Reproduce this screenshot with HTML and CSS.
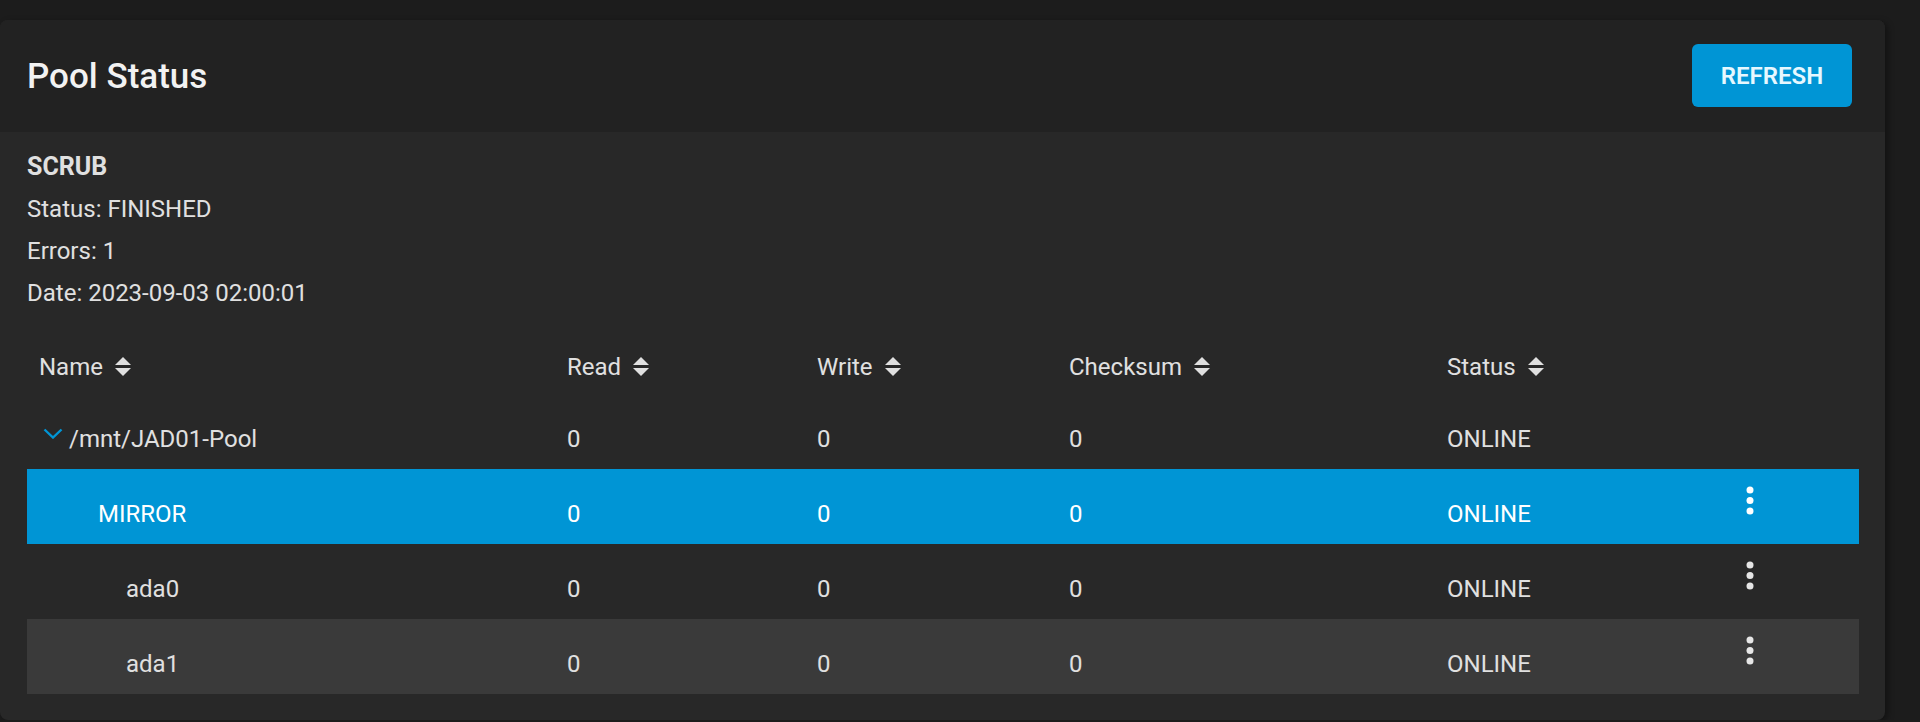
FILE: index.html
```html
<!DOCTYPE html>
<html lang="en">
<head>
    <meta charset="UTF-8">
    <meta name="viewport" content="width=device-width, initial-scale=1.0">
    <title>Pool Status</title>
    <link rel="stylesheet" href="styles.css">
</head>
<body>
    <div class="card">
        <div class="card-header">
            <h1 class="card-title">Pool Status</h1>
            <button class="refresh-button" type="button">REFRESH</button>
        </div>
        <div class="card-body">
            <div class="scrub">
                <div class="scrub-title">SCRUB</div>
                <div class="scrub-line">Status: FINISHED</div>
                <div class="scrub-line">Errors: 1</div>
                <div class="scrub-line">Date: 2023-09-03 02:00:01</div>
            </div>
            <div class="pool-table">
                <div class="table-row table-head">
                    <div class="cell">Name <svg class="sort-icon" viewBox="0 0 16 20"><polygon points="0,8 8,0 16,8"/><polygon points="0,11 8,19 16,11"/></svg></div>
                    <div class="cell">Read <svg class="sort-icon" viewBox="0 0 16 20"><polygon points="0,8 8,0 16,8"/><polygon points="0,11 8,19 16,11"/></svg></div>
                    <div class="cell">Write <svg class="sort-icon" viewBox="0 0 16 20"><polygon points="0,8 8,0 16,8"/><polygon points="0,11 8,19 16,11"/></svg></div>
                    <div class="cell">Checksum <svg class="sort-icon" viewBox="0 0 16 20"><polygon points="0,8 8,0 16,8"/><polygon points="0,11 8,19 16,11"/></svg></div>
                    <div class="cell">Status <svg class="sort-icon" viewBox="0 0 16 20"><polygon points="0,8 8,0 16,8"/><polygon points="0,11 8,19 16,11"/></svg></div>
                    <div class="cell"></div>
                </div>
                <div class="table-row">
                    <div class="cell name-cell level-0">
                        <svg class="chevron" viewBox="0 0 20 11"><polyline points="1.5,1.5 10,9.5 18.5,1.5"/></svg>/mnt/JAD01-Pool
                    </div>
                    <div class="cell">0</div>
                    <div class="cell">0</div>
                    <div class="cell">0</div>
                    <div class="cell">ONLINE</div>
                    <div class="cell"></div>
                </div>
                <div class="table-row selected">
                    <div class="cell name-cell level-1">MIRROR</div>
                    <div class="cell">0</div>
                    <div class="cell">0</div>
                    <div class="cell">0</div>
                    <div class="cell">ONLINE</div>
                    <div class="cell actions"><svg class="more-icon" viewBox="0 0 8 30"><circle cx="4" cy="4" r="3.5"/><circle cx="4" cy="14.5" r="3.5"/><circle cx="4" cy="25" r="3.5"/></svg></div>
                </div>
                <div class="table-row">
                    <div class="cell name-cell level-2">ada0</div>
                    <div class="cell">0</div>
                    <div class="cell">0</div>
                    <div class="cell">0</div>
                    <div class="cell">ONLINE</div>
                    <div class="cell actions"><svg class="more-icon" viewBox="0 0 8 30"><circle cx="4" cy="4" r="3.5"/><circle cx="4" cy="14.5" r="3.5"/><circle cx="4" cy="25" r="3.5"/></svg></div>
                </div>
                <div class="table-row striped">
                    <div class="cell name-cell level-2">ada1</div>
                    <div class="cell">0</div>
                    <div class="cell">0</div>
                    <div class="cell">0</div>
                    <div class="cell">ONLINE</div>
                    <div class="cell actions"><svg class="more-icon" viewBox="0 0 8 30"><circle cx="4" cy="4" r="3.5"/><circle cx="4" cy="14.5" r="3.5"/><circle cx="4" cy="25" r="3.5"/></svg></div>
                </div>
            </div>
        </div>
    </div>
</body>
</html>
```

FILE: styles.css
```css
body {
    margin: 0;
    background: #1c1c1c;
    font-family: Roboto, "Noto Sans", sans-serif;
    color: #e0e0e0;
}
.card {
    width: 1885px;
    margin-top: 20px;
    background: #282828;
    border-radius: 8px;
    overflow: hidden;
    box-shadow: 3px 2px 6px rgba(0, 0, 0, 0.35);
}
.card-header {
    height: 112px;
    background: #222222;
    display: flex;
    align-items: center;
    justify-content: space-between;
    padding: 0 33px 0 27px;
}
.card-title {
    margin: 0;
    font-size: 35px;
    font-weight: 500;
    color: #f2f2f2;
}
.refresh-button {
    width: 160px;
    height: 63px;
    border: none;
    border-radius: 6px;
    background: #0095d5;
    color: #e6f8ff;
    font-family: Roboto, sans-serif;
    font-size: 24px;
    font-weight: 600;
    margin-top: -1px;
}
.card-body {
    padding: 14px 26px 26px 27px;
}
.scrub {
    font-size: 24px;
}
.scrub-title,
.scrub-line {
    line-height: 42px;
}
.scrub-title {
    font-size: 25px;
    font-weight: 700;
}
.pool-table {
    margin-top: 16px;
    font-size: 24px;
}
.table-row {
    display: grid;
    grid-template-columns: 528px 250px 252px 378px 300px 1fr;
    height: 75px;
}
.table-head {
    height: 64px;
}
.cell {
    display: flex;
    align-items: flex-start;
    padding: 31px 0 0 12px;
    line-height: 28px;
    white-space: nowrap;
}
.table-head .cell {
    padding-top: 23px;
}
.sort-icon {
    width: 16px;
    height: 20px;
    margin: 4px 0 0 12px;
    fill: #e0e0e0;
}
.chevron {
    width: 20px;
    height: 11px;
    margin: 3px 6px 0 4px;
    fill: none;
    stroke: #0095d5;
    stroke-width: 2.4;
}
.level-1 {
    padding-left: 71px;
}
.level-2 {
    padding-left: 99px;
}
.selected {
    background: #0095d5;
    color: #ffffff;
}
.striped {
    background: #3a3a3a;
}
.actions {
    padding-top: 17px;
    padding-left: 11px;
}
.more-icon {
    width: 8px;
    height: 30px;
    fill: #e6e6e6;
}
.selected .more-icon {
    fill: #ffffff;
}
```
